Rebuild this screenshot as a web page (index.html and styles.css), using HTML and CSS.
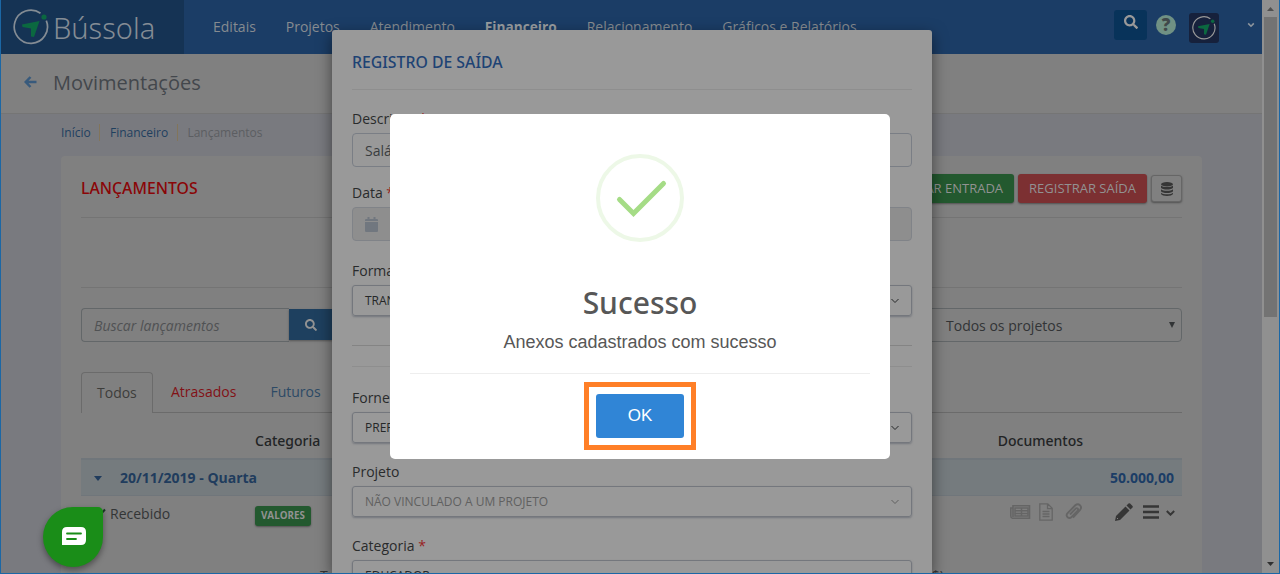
FILE: index.html
```html
<!DOCTYPE html>
<html lang="pt-BR">
<head>
<meta charset="utf-8">
<title>Bússola - Movimentações</title>
<link rel="stylesheet" href="styles.css">
</head>
<body>
<svg width="0" height="0" class="defs">
  <symbol id="search" viewBox="0 0 512 512"><path d="M505 442.700 405.300 343c-4.500-4.500-10.600-7-17-7H372c27.600-35.300 44-79.700 44-128C416 93.100 322.900 0 208 0S0 93.100 0 208s93.100 208 208 208c48.300 0 92.700-16.400 128-44v16.300c0 6.400 2.500 12.500 7 17l99.700 99.700c9.400 9.400 24.600 9.400 33.900 0l28.300-28.300c9.400-9.400 9.400-24.600.1-34zM208 336c-70.700 0-128-57.200-128-128 0-70.700 57.200-128 128-128 70.700 0 128 57.200 128 128 0 70.700-57.200 128-128 128z"/></symbol>
  <symbol id="compass" viewBox="0 0 36 36"><path d="M27.500 4.200A16.600 16.600 0 1 0 33.300 11.600" fill="none" stroke="currentColor" stroke-width="1.700"/><path class="needle" d="M9 15.500 26.500 12 21 28 18 27.500 18 19.500 9.500 18Z"/><circle class="needle" cx="31" cy="8" r="2.600"/></symbol>
  <symbol id="chevron" viewBox="0 0 10 10"><path d="M1.500 3 5 6.500 8.500 3" fill="none" stroke="currentColor"/></symbol>
</svg>
<div class="window">
  <div class="page">
    <header class="topbar">
      <div class="brand"><svg class="brand-icon"><use href="#compass"/></svg><span>Bússola</span></div>
      <nav class="nav"><a>Editais</a><a>Projetos</a><a>Atendimento</a><a class="active">Financeiro</a><a>Relacionamento</a><a>Gráficos e Relatórios</a></nav>
      <div class="tools">
        <span class="tool-search"><svg width="14" height="14"><use href="#search"/></svg></span>
        <span class="help">?</span>
        <span class="avatar"><svg width="24" height="24"><use href="#compass"/></svg></span>
        <svg class="user-chevron" width="8" height="8"><use href="#chevron"/></svg>
      </div>
    </header>
    <div class="heading">
      <svg width="13" height="12" viewBox="0 0 13 12"><path d="M6.500 1 1.700 6l4.800 5M1.700 6H12.500" fill="none" stroke="currentColor" stroke-width="2.500"/></svg>
      <h1>Movimentações</h1>
    </div>
    <div class="crumbs"><a>Início</a><a>Financeiro</a><span>Lançamentos</span></div>
    <main class="card">
      <div class="card-head">
        <h2>LANÇAMENTOS</h2>
        <div class="actions"><button class="btn green">REGISTRAR ENTRADA</button><button class="btn red">REGISTRAR SAÍDA</button>
          <button class="btn data"><svg width="12" height="14" viewBox="0 0 12 14"><ellipse cx="6" cy="2.200" rx="6" ry="2.200"/><path d="M0 3.500c2 2 10 2 12 0v2.200c-1 2.400-11 2.400-12 0zM0 7.200c2 2 10 2 12 0v2c-1 2.400-11 2.400-12 0zM0 10.700c2 2 10 2 12 0v1.300c-1 2.600-11 2.600-12 0z"/></svg></button>
        </div>
      </div>
      <div class="summary"></div>
      <div class="filters">
        <div class="search-field">Buscar lançamentos</div>
        <button class="search-btn"><svg width="12" height="12"><use href="#search"/></svg></button>
        <div class="project-select"><span>Todos os projetos</span><svg width="6" height="6"><path d="M0 0h6L3 6z"/></svg></div>
      </div>
      <div class="tabs"><a class="tab current">Todos</a><a class="tab late">Atrasados</a><a class="tab">Futuros</a></div>
      <div class="thead"><span class="col-category">Categoria</span><span class="col-docs">Documentos</span></div>
      <div class="group"><svg width="8" height="5"><path d="M0 0h8L4 5z"/></svg><b>20/11/2019 - Quarta</b><b class="total">50.000,00</b></div>
      <div class="entry">
        <div class="status"><svg width="12" height="10" viewBox="0 0 12 10"><path d="M1 5 4.500 8.500 11 1.500" fill="none" stroke="currentColor" stroke-width="2"/></svg>Recebido</div>
        <span class="badge">VALORES</span>
        <div class="row-icons">
          <svg class="dim" width="21" height="14" viewBox="0 0 21 14"><path d="M3 .800h16.500v12.400H2.500Q.800 13 .800 11V3H3zM3 3v9" fill="none" stroke="currentColor" stroke-width="1.600"/><path d="M5 3h13v8H5zM5 5.700h13M5 8.400h13M11.500 3v8" fill="none" stroke="currentColor" stroke-width="1.500"/></svg>
          <svg class="dim" width="14" height="18" viewBox="0 0 14 18"><path d="M.800.800h8l4.400 4.400v12H.800zM8.500 1v4.600H13M3.500 8.500h7M3.500 11h7M3.500 13.500h7" fill="none" stroke="currentColor" stroke-width="1.300"/></svg>
          <svg class="dim" width="17" height="18" viewBox="0 0 17 18"><path d="M5 11.500 10.700 5.600q1.200-1 2 0t0 2L6.600 14q-2 2-4 .2t0-4L10.300 2.300q2.500-2.300 4.800 0 2 2.400-.2 4.800L8 14.500" fill="none" stroke="currentColor" stroke-width="1.900"/></svg>
          <svg class="pencil" width="18" height="18" viewBox="0 0 18 18"><path d="M0 18 1 13 10.500 3.500 14.500 7.500 5 17zM11.500 2.500 13.500.500q.800-.700 1.600 0l2.400 2.400q.700.800 0 1.600l-2 2z"/><path d="m2 15 1 1" stroke="#808080"/></svg>
          <svg class="menu" width="16" height="14" viewBox="0 0 16 14"><path d="M0 1.500h16M0 7h16M0 12.500h16" stroke="currentColor" stroke-width="2.600"/></svg>
          <svg class="row-chevron" width="9" height="6" viewBox="0 0 9 6"><path d="M.800 1 4.500 4.700 8.200 1" fill="none" stroke="currentColor" stroke-width="2"/></svg>
        </div>
      </div>
      <div class="detail"><span>T</span><span class="detail-end">$)</span></div>
    </main>
  </div>
  <div class="scrollbar">
    <svg class="up" width="7" height="4"><path d="M0 4h7L3.500 0z"/></svg>
    <div class="thumb"></div>
    <svg class="down" width="7" height="4"><path d="M0 0h7L3.500 4z"/></svg>
  </div>
</div>

<section class="modal">
  <h3>REGISTRO DE SAÍDA</h3>
  <div class="field first"><label>Descrição <i>*</i></label><div class="input">Salário</div></div>
  <div class="field"><label>Data <i>*</i></label><div class="input disabled"><svg width="13" height="15" viewBox="0 0 13 15"><path d="M2.500 0H4.500V2H8.500V0h2v2H12q1 0 1 1v1H0V3q0-1 1-1h1.500zM0 5h13v8.500q0 1.500-1 1.500H1q-1 0-1-1.500z"/></svg></div></div>
  <div class="field pay"><label>Forma de pagamento</label><div class="select"><span>TRANSFERÊNCIA</span><svg width="10" height="10"><use href="#chevron"/></svg></div></div>
  <div class="divider"></div>
  <div class="field supplier"><label>Fornecedor</label><div class="select"><span>PREFEITURA</span><svg width="10" height="10"><use href="#chevron"/></svg></div></div>
  <div class="field project"><label>Projeto</label><div class="select muted"><span>NÃO VINCULADO A UM PROJETO</span><svg width="10" height="10"><use href="#chevron"/></svg></div></div>
  <div class="field project"><label>Categoria <i>*</i></label><div class="select"><span>EDUCADOR</span><svg width="10" height="10"><use href="#chevron"/></svg></div></div>
</section>

<section class="alert">
  <svg class="success" width="88" height="88" viewBox="0 0 88 88"><circle cx="44" cy="44" r="42" fill="none" stroke="#edf8e7" stroke-width="4"/><path d="M23.500 45.500 37.500 59.500 67.500 29.500" fill="none" stroke="#a5dc86" stroke-width="5" stroke-linecap="round"/></svg>
  <h2>Sucesso</h2>
  <p>Anexos cadastrados com sucesso</p>
  <footer><div class="highlight"><button>OK</button></div></footer>
</section>

<div class="chat"><svg width="24" height="18" viewBox="0 0 24 18"><path d="M5 0h14q5 0 5 5v8q0 5-5 5H0V5q0-5 5-5z" fill="#fff"/><path d="M5 6.500h14M5 12h9" stroke="#1a8d18" stroke-width="1.800" stroke-linecap="round"/></svg></div>
</body>
</html>
```
FILE: styles.css
```css
* { box-sizing: border-box; }
body { margin: 0; width: 1280px; height: 574px; overflow: hidden; position: relative; font: 14px/20px "Open Sans", "Noto Sans", sans-serif; color: #333536; }
h1, h2, h3, p { margin: 0; font-weight: 400; }
button { font: inherit; border: 0; padding: 0; }
svg { display: block; fill: currentColor; flex: none; }
.defs { position: absolute; }
.window { display: flex; height: 574px; border: solid #1b67a5; border-width: 0 1px 1px; background: #797a7f; }
.page { width: 1261px; height: 573px; overflow: hidden; }

.topbar { display: flex; height: 54px; background: #1b3d66; color: #868b90; }
.brand { width: 183px; display: flex; align-items: center; padding: 0 0 0 12px; background: #153354; color: #848c94; }
.brand span { padding: 2px 0 0 4px; font: 350 29px/52px "Noto Sans", "Open Sans", sans-serif; letter-spacing: 0; }
.brand-icon { width: 36px; height: 36px; }
.needle { fill: #0b6840; }
.nav { display: flex; align-items: center; gap: 29.900px; padding-left: 29px; white-space: nowrap; }
.active { font-weight: 700; font-size: 13.700px; color: #999da0; }
.tools { display: flex; margin-left: auto; padding-right: 7px; }
.tool-search { width: 33px; height: 30px; margin-top: 10px; padding: 5px 0 0 10px; background: #08335a; border-radius: 3px; color: #999; }
.help { width: 20px; height: 20px; margin: 15px 0 0 9px; border-radius: 50%; background: #709184; color: #40484a; font-weight: 800; font-size: 17px; text-align: center; }
.avatar { width: 30px; height: 30px; margin: 13px 0 0 13px; padding: 3px; border-radius: 3px; background: #16213c; color: #999; }
.avatar .needle { fill: #096914; }
.user-chevron { margin: 21px 0 0 28px; color: #8d959d; stroke-width: 2; }

.heading { display: flex; align-items: center; gap: 16px; height: 60px; padding: 0 0 2px 23px; background: #808080; border-bottom: 1px solid #757575; color: #385a7c; }
.heading h1 { font-size: 20px; line-height: 28px; color: #43474c; }
.heading svg { margin-bottom: 2px; }
.crumbs { display: flex; height: 42px; padding: 10px 0 0 60px; font-size: 12px; line-height: 18px; color: #5c5e62; }
.crumbs a { padding-right: 8.500px; margin-right: 9.700px; border-right: 1px solid #82755b; height: 17px; color: #1f405f; }

.card { width: 1141px; margin-left: 60px; height: 430px; padding: 0 20px; background: #808080; border-radius: 4px; }
.card-head { display: flex; justify-content: space-between; height: 62px; padding-top: 18px; border-bottom: 1px solid #747474; }
.card-head h2 { font: 500 15.800px/28px "Noto Sans", "Open Sans", sans-serif; color: #8a0507; }
.actions { display: flex; gap: 4px; }
.btn { height: 29px; padding: 0 11px 1px; border-radius: 3px; font-size: 13px; line-height: 28px; color: #929292; box-shadow: 0 1px 2px #505050; }
.green { background: #23592f; }
.red { background: #7c3032; }
.btn.data { width: 31px; height: 27px; margin-top: 1px; padding: 0 9px; border: 1px solid #666; background: #808080; color: #353535; }
.summary { height: 70px; border-bottom: 1px solid #747474; }
.filters { display: flex; margin-top: 20px; height: 34px; font-size: 14px; line-height: 33px; }
.search-field { width: 208px; padding-left: 12px; border: 1px solid #636769; border-right: 0; border-radius: 4px 0 0 4px; font-style: italic; color: #505254; }
.search-btn { width: 44px; height: 31px; margin-top: 1px; padding-left: 16px; background: #1e405f; color: #929292; box-shadow: 0 1px 2px #555; }
.project-select { width: 300px; margin-left: auto; padding: 0 6px 0 63px; display: flex; align-items: center; justify-content: space-between; border: 1px solid #636769; border-radius: 4px; color: #323436; }
.tabs { display: flex; margin-top: 30px; height: 41px; border-bottom: 1px solid #6b6b6b; line-height: 40px; color: #2d4a66; }
.tab { padding: 0 16px 0 17px; }
.current { width: 72px; height: 41px; padding: 0 15px; border: 1px solid #6b6b6b; border-bottom: 0; border-radius: 4px 4px 0 0; background: #808080; color: #3d3d3b; line-height: 39px; }
.late { padding: 0 17px 0 18px; color: #821116; }
.thead { display: flex; height: 45px; padding-left: 174px; font: 500 14px/56px "Noto Sans", "Open Sans", sans-serif; color: #222425; }
.col-docs { margin-left: auto; padding-right: 99px; }
.group { display: flex; align-items: center; height: 38px; padding: 1px 8px 0 13px; background: #757b7e; border: solid #70767b; border-width: 2px 0 1px; color: #203c5d; }
.group b { padding-left: 18px; }
.group .total { margin-left: auto; color: #1b3d66; }
.entry { display: flex; height: 70px; }
.status { display: flex; gap: 4px; width: 174px; padding: 8px 0 0 13px; }
.status svg { margin-top: 4px; color: #1b3a25; }
.badge { height: 20px; margin-top: 10px; padding: 0 6px; border-radius: 3px; background: #23592f; color: #929292; font-size: 9.800px; font-weight: 700; line-height: 19px; box-shadow: 0 1px 2px #505050; }
.row-icons { display: flex; margin-left: auto; padding: 7px 7px 0 0; color: #363636; }
.dim { color: #656565; margin-right: 12px; }
.row-icons .dim:first-child { margin: 2px 8px 0 0; }
.row-icons .dim:nth-child(3) { margin-right: 13px; }
.pencil { margin: 0 10px 0 20px; }
.menu { margin: 2px 7px 0 0; }
.row-chevron { margin-top: 7px; }
.detail { display: flex; padding-left: 239px; color: #333; line-height: 20px; }
.detail-end { margin-left: 604px; }

.scrollbar { width: 17px; height: 573px; background: #909090; color: #505050; }
.scrollbar .up { margin: 7px 0 0 5px; }
.thumb { width: 13px; height: 300px; margin: 6px 2px 0; background: #737373; }
.scrollbar .down { margin: 245px 0 0 5px; color: #303030; }

.modal { position: absolute; left: 332px; top: 30px; width: 600px; height: 543px; padding: 0 20px; overflow: hidden; background: #999; border-radius: 3px 3px 0 0; box-shadow: 0 5px 15px rgba(0,0,0,.5); clip-path: inset(-30px -30px 0 -30px); color: #292b2c; }
.modal h3 { height: 60px; padding-top: 18px; font: 500 15.800px/28px "Noto Sans", "Open Sans", sans-serif; color: #1e4374; border-bottom: 1px solid #8e8e8e; }
.field { padding-top: 16px; }
.field.first { padding-top: 19px; }
label { display: block; height: 24px; line-height: 20px; }
label i { color: #981f22; font-style: normal; }
.input { height: 34px; padding: 0 12px; line-height: 34px; border: 1px solid #7a7e85; border-radius: 4px; color: #3a3d40; }
.disabled { display: flex; align-items: center; background: #8e8e8e; border-color: #808388; color: #71777f; }
.pay { padding-top: 20px; }
.select { display: flex; align-items: center; justify-content: space-between; height: 31px; padding: 0 11px 0 12px; border: 1px solid #74777d; border-radius: 3px; font-size: 12px; color: #252728; box-shadow: 0 1px 2px #74777d; }
.select.muted { color: #606060; }
.divider { height: 22px; margin-top: 29px; border: solid #848484; border-width: 1px 0; border-bottom-color: #8e8e8e; }
.supplier { padding-top: 21px; }
.project { padding-top: 19px; }

.alert { position: absolute; left: 390px; top: 114px; width: 500px; height: 345px; padding: 40px 20px 0; background: #fff; border-radius: 5px; text-align: center; color: #575757; }
.success { margin: 0 auto; }
.alert h2 { margin-top: 40px; font: 550 30px/41px "Noto Sans", "Open Sans", sans-serif; }
.alert p { margin-top: 3px; height: 47px; font: 18px/32px "Liberation Sans", Arial, sans-serif; }
.alert footer { display: flex; justify-content: center; padding-top: 8px; border-top: 1px solid #eee; }
.highlight { width: 112px; height: 68px; padding: 7px; border: 5px solid #ff7f27; }
.highlight button { width: 88px; height: 44px; border-radius: 3px; background: #3085d6; color: #fff; font: 17px "Liberation Sans", Arial, sans-serif; }

.chat { position: absolute; left: 43px; top: 507px; width: 60px; height: 60px; padding: 20px 0 0 19px; border-radius: 50% 5px 50% 50%; background: #1a8d18; box-shadow: 0 3px 6px rgba(0,0,0,.4); }
```
